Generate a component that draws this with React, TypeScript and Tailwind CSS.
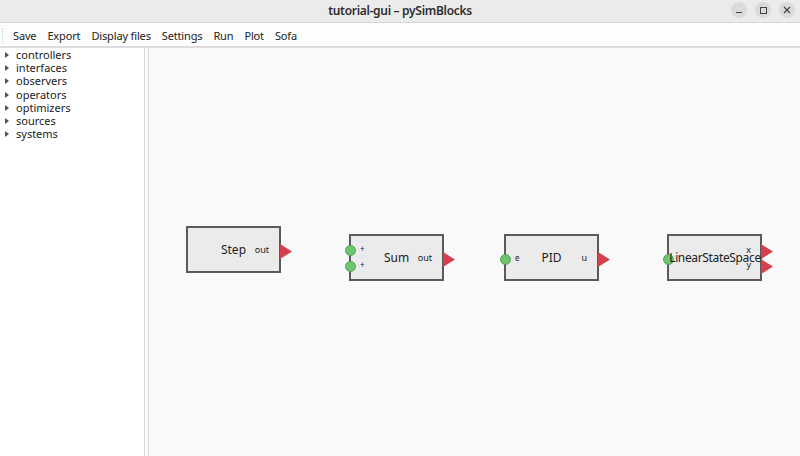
import React from "react";

const font = { fontFamily: '"Noto Sans", "Open Sans", sans-serif' };

function InPort({ top }: { top: number }) {
  return (
    <div
      className="absolute -left-[6px] w-[11px] h-[11px] rounded-full bg-[#6fc46f] border border-[#52a352]"
      style={{ top: top - 5.5 }}
    />
  );
}

function OutPort({ top }: { top: number }) {
  return (
    <svg
      className="absolute -right-[13px]"
      style={{ top: top - 7.5 }}
      width="12"
      height="15"
      viewBox="0 0 12 15"
    >
      <polygon points="0,0 12,7.5 0,15" fill="#d6404e" />
    </svg>
  );
}

type BlockProps = {
  x: number;
  y: number;
  name: string;
  ins: { y: number; label: string }[];
  outs: { y: number; label: string }[];
  h?: number;
  lss?: boolean;
};

function Block({ x, y, name, ins, outs, h = 47, lss }: BlockProps) {
  return (
    <div
      className="absolute w-[95px] border-2 border-[#5a5a5a] bg-[#ebebeb] flex items-center justify-center"
      style={{ left: x, top: y, height: h }}
    >
      {ins.map((p, i) => (
        <React.Fragment key={"i" + i}>
          <InPort top={p.y} />
          {p.label && (
            <span
              className="absolute left-[9px] text-[8px] leading-none text-[#222]"
              style={{ top: p.y - 5 }}
            >
              {p.label}
            </span>
          )}
        </React.Fragment>
      ))}
      <span
        className={
          lss
            ? "relative z-10 text-[12px] leading-none text-[#222] whitespace-nowrap tracking-[-0.35px] ml-[1px]"
            : "relative z-10 text-[12px] leading-none text-[#222]"
        }
      >
        {name}
      </span>
      {outs.map((p, i) => (
        <React.Fragment key={"o" + i}>
          <OutPort top={p.y} />
          {p.label && (
            <span
              className={
                lss
                  ? "absolute right-[9px] text-[9px] leading-none text-[#222]"
                  : "absolute right-[10px] text-[9px] leading-none text-[#222]"
              }
              style={{ top: p.y - 6 }}
            >
              {p.label}
            </span>
          )}
        </React.Fragment>
      ))}
    </div>
  );
}

const tree = [
  "controllers",
  "interfaces",
  "observers",
  "operators",
  "optimizers",
  "sources",
  "systems",
];

export default function App() {
  return (
    <div className="w-[800px] h-[456px] flex flex-col bg-white overflow-hidden" style={font}>
      {/* title bar */}
      <div className="h-[23px] bg-[#ebebeb] border-b border-[#d6d6d6] flex items-center relative shrink-0">
        <div className="flex-1 text-center text-[12px] font-semibold text-[#2e2e2e] tracking-[-0.3px]">
          tutorial-gui – pySimBlocks
        </div>
        <div className="absolute right-[5px] top-[2px] flex gap-[8px]">
          <div className="w-[16px] h-[16px] rounded-full bg-[#dadada] flex items-center justify-center">
            <div className="w-[6px] h-[1px] bg-[#444] mt-[5px]" />
          </div>
          <div className="w-[16px] h-[16px] rounded-full bg-[#dadada] flex items-center justify-center">
            <div className="w-[7px] h-[7px] border border-[#444]" />
          </div>
          <div className="w-[16px] h-[16px] rounded-full bg-[#dadada] flex items-center justify-center">
            <svg width="8" height="8" viewBox="0 0 8 8">
              <path d="M1 1L7 7M7 1L1 7" stroke="#444" strokeWidth="1.2" />
            </svg>
          </div>
        </div>
      </div>
      {/* menu bar */}
      <div className="h-[23px] pt-[3px] bg-[#fdfdfd] flex items-center text-[11px] text-[#222] shrink-0 relative">
        <div className="w-[4px] h-[16px] ml-[2px] mr-[7px] border-l border-dotted border-[#cfcfcf]" />
        <div className="flex gap-[11px] tracking-[-0.15px]">
          <span>Save</span>
          <span>Export</span>
          <span>Display files</span>
          <span>Settings</span>
          <span>Run</span>
          <span>Plot</span>
          <span>Sofa</span>
        </div>
      </div>
      <div className="h-[2px] bg-[#dcdcdc] shrink-0" />
      {/* main */}
      <div className="flex-1 flex min-h-0">
        <div className="w-[145px] bg-white border-r border-[#d8d8d8] shrink-0">
          {tree.map((t) => (
            <div key={t} className="h-[13.3px] flex items-center text-[11px] text-[#222] leading-[12px]">
              <svg className="ml-[5px] mr-[7px]" width="4" height="6" viewBox="0 0 4 6">
                <polygon points="0,0 4,3 0,6" fill="#555" />
              </svg>
              <span>{t}</span>
            </div>
          ))}
        </div>
        <div className="w-[3px] bg-[#fafafa] shrink-0" />
        <div className="w-[1px] bg-[#d8d8d8] shrink-0" />
        <div className="flex-1 relative bg-[#f9f9f9]">
          <Block x={37} y={178} name="Step" ins={[]} outs={[{ y: 23, label: "out" }]} />
          <Block
            x={200}
            y={186}
            name="Sum"
            ins={[
              { y: 14, label: "+" },
              { y: 30, label: "+" },
            ]}
            outs={[{ y: 23, label: "out" }]}
          />
          <Block x={355} y={186} name="PID" ins={[{ y: 23, label: "e" }]} outs={[{ y: 23, label: "u" }]} />
          <Block
            x={518}
            y={186}
            name="LinearStateSpace"
            lss
            ins={[{ y: 23, label: "" }]}
            outs={[
              { y: 15, label: "x" },
              { y: 30, label: "y" },
            ]}
          />
        </div>
      </div>
    </div>
  );
}
